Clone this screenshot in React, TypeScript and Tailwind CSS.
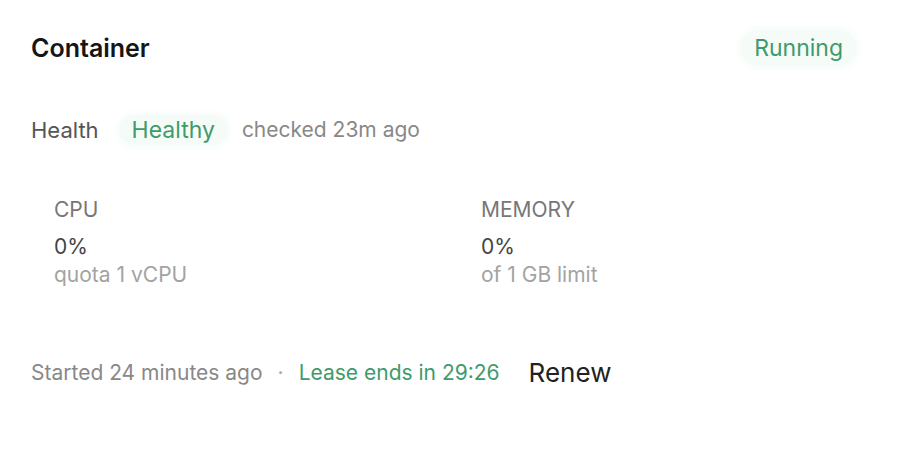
import React from "react";

const Metric = ({ label, value, note }: { label: string; value: string; note: string }) => (
  <div className="flex flex-col">
    <span className="text-[21px] leading-[26px] text-[#777]">{label}</span>
    <span className="mt-[10px] text-[21px] leading-[28px] text-[#444]">{value}</span>
    <span className="text-[21px] leading-[28px] text-[#a3a3a3]">{note}</span>
  </div>
);

export default function App() {
  return (
    <div className="w-[900px] h-[450px] bg-white font-['Inter',sans-serif]">
      <div className="pl-[31px] pr-[43px] pt-[33px]">
        <header className="flex h-[30px] items-center justify-between">
          <h1 className="text-[25px] leading-[30px] font-semibold text-[#151515]">Container</h1>
          <span className="rounded-full bg-[#f5fcf8] px-[14px] py-[3px] text-[23px] leading-[30px] text-[#3f9a6c] shadow-[0_0_6px_3px_#f8fdfa]">
            Running
          </span>
        </header>

        <div className="mt-[52px] flex h-[30px] items-center text-[21px] leading-[30px]">
          <span className="text-[22px] text-[#555]">Health</span>
          <span className="ml-[20px] rounded-full bg-[#f5fcf8] px-[13px] text-[23px] leading-[30px] text-[#3f9a6c] shadow-[0_0_6px_3px_#f8fdfa]">
            Healthy
          </span>
          <span className="ml-[14px] text-[#888]">checked 23m ago</span>
        </div>

        <div className="mt-[52px] grid grid-cols-[427px_1fr] px-[23px]">
          <Metric label="CPU" value="0%" note="quota 1 vCPU" />
          <Metric label="MEMORY" value="0%" note="of 1 GB limit" />
        </div>

        <footer className="mt-[69px] flex h-[30px] items-center text-[21px] leading-[30px]">
          <span className="text-[#888]">Started 24 minutes ago</span>
          <span className="mx-[15px] text-[#aaa]">·</span>
          <span className="text-[#3f9a6c]">Lease ends in 29:26</span>
          <button className="ml-[29px] text-[26px] leading-[30px] text-[#222]">Renew</button>
        </footer>
      </div>
    </div>
  );
}
